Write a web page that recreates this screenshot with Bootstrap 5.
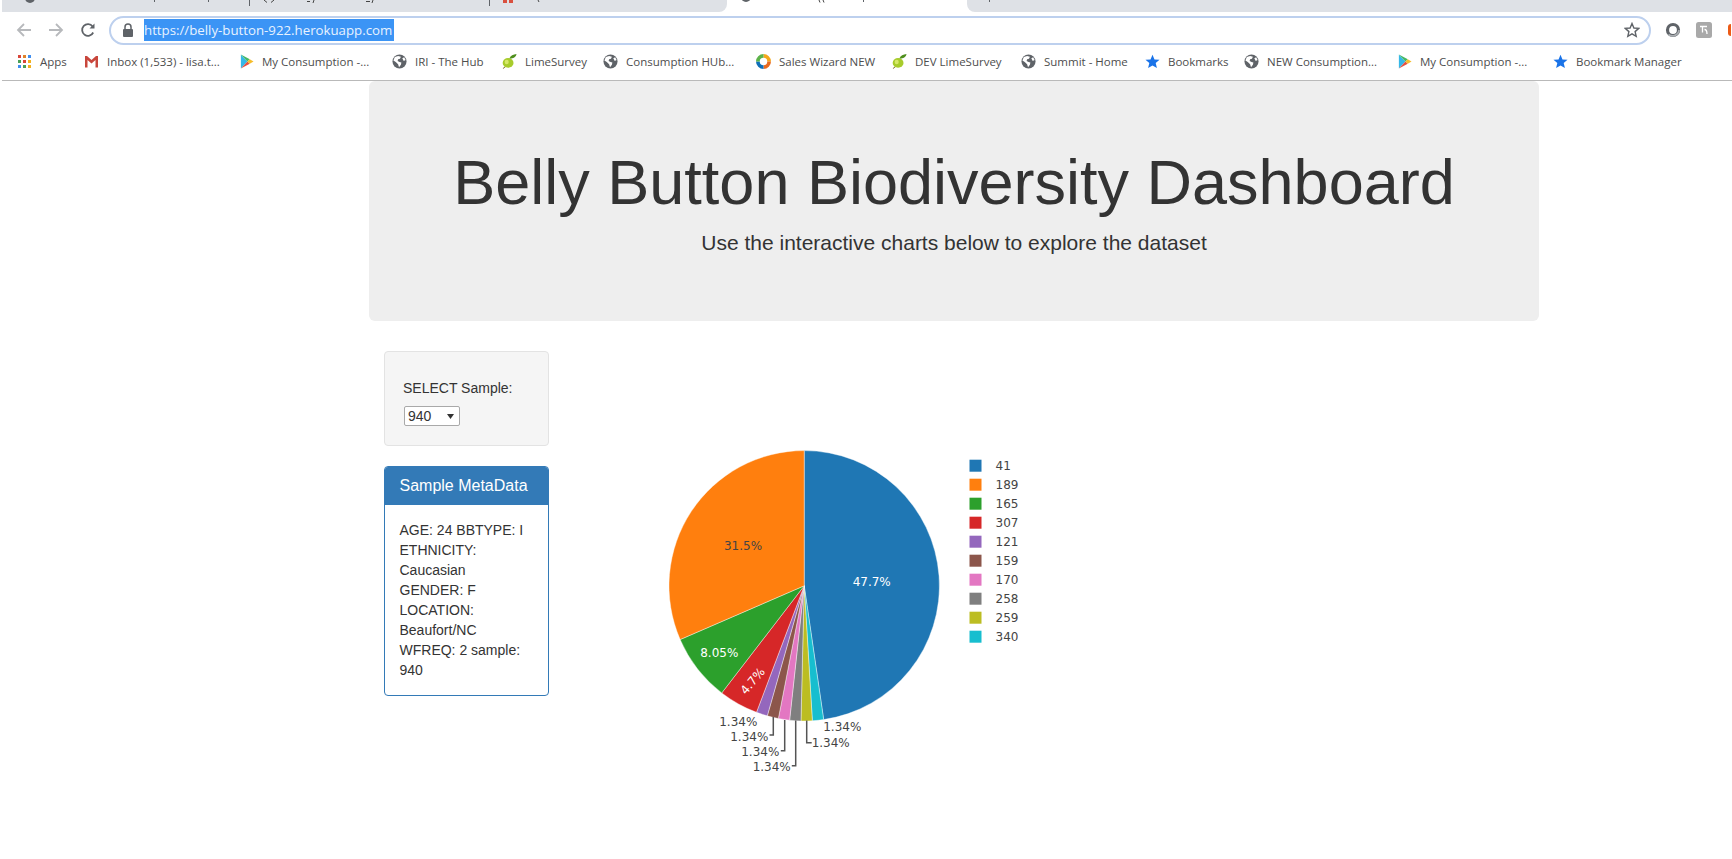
<!DOCTYPE html>
<html lang="en">
<head>
<meta charset="utf-8">
<title>Belly Button Biodiversity Dashboard</title>
<link href="https://cdn.jsdelivr.net/npm/bootstrap@5.3.0/dist/css/bootstrap.min.css" rel="stylesheet">
<style>
html,body{margin:0;background:#fff;overflow:hidden}
body{font-family:"Liberation Sans",Arial,sans-serif;font-size:14px;line-height:20px;color:#333}
.tab-strip{height:12px;position:relative;margin-left:2px}
.tab-off{background:#dee1e6}
.tab-off-l{width:725px;border-bottom-right-radius:8px}
.tab-on{width:240px;background:#fff}
.tab-off-r{border-bottom-left-radius:8px}
.tab-marks{position:absolute;left:-2px;top:0}
.tool-row{height:33px;padding-top:3px}
.nav-ico{width:16px;height:16px;flex:none}
.ico-back{margin-left:16px}
.ico-fwd{margin-left:16px}
.ico-reload{margin-left:16px}
.omni{width:1542px;height:29px;margin-left:13px;border:2px solid #bdd0ee;border-radius:15px;background:#fff}
.ico-lock{margin-left:11px;width:12px;height:14px;flex:none}
.url-sel{margin-left:10px;background:#3b94f5;color:#e8f2ff;font-family:"Open Sans",sans-serif;font-size:13.25px;line-height:22px;height:22px;white-space:nowrap;min-width:250px}
.ico-star{margin-left:auto;margin-right:9px;width:16px;height:16px}
.ext-ring{margin-left:14px;width:16px;height:16px;flex:none}
.ext-r{margin-left:15px;width:16px;height:16px;flex:none}
.ext-o{margin-left:16px;width:3px;height:12px;background:#ec5b16;border-radius:3px 0 0 3px;flex:none}
.mark-bar{height:36px;margin-left:2px;border-bottom:1px solid #b9b9b9;font-family:"Open Sans",sans-serif;font-size:11.5px;color:#4d4d4d;padding:0 0 2px 15px;white-space:nowrap}
.mark-item{display:flex;align-items:center;flex:none}
.mark-item:nth-child(1){width:67px}
.mark-item:nth-child(2){width:155px}
.mark-item:nth-child(3){width:153px}
.mark-item:nth-child(4){width:110px}
.mark-item:nth-child(5){width:101px}
.mark-item:nth-child(6){width:153px}
.mark-item:nth-child(7){width:136px}
.mark-item:nth-child(8){width:129px}
.mark-item:nth-child(9){width:124px}
.mark-item:nth-child(10){width:99px}
.mark-item:nth-child(11){width:153px}
.mark-item:nth-child(12){width:156px}
.mark-ico{width:15px;height:15px;flex:none;margin-right:8px}
.dash-wrap{width:1170px;margin-left:369px}
.hero{height:240px;background:#eee;border-radius:6px;color:#333;padding-top:67px}
.hero-title{font-size:63px;line-height:69px;margin:0;font-weight:400;font-family:inherit}
.hero-sub{font-size:21px;line-height:28px;margin:12px 0 0}
.dash-row{--bs-gutter-x:30px;margin:30px 0 0}
.pick-box{height:95px;background:#f5f5f5;border:1px solid #e3e3e3;border-radius:4px;padding:26px 18px 0;margin-bottom:20px}
.pick-label{display:block;margin-bottom:8px}
.pick-sel{display:block;margin-left:1px;appearance:none;-webkit-appearance:none;width:56px;height:20px;padding:0 0 0 3px;border:1px solid #a9a9a9;border-radius:2px;background:#fff url("data:image/svg+xml,%3Csvg xmlns='http://www.w3.org/2000/svg' width='7' height='5'%3E%3Cpath d='M0 0h7L3.5 5z' fill='%23333'/%3E%3C/svg%3E") no-repeat 42px 7px;font:14px "Liberation Sans",Arial,sans-serif;color:#333}
.meta-card{--bs-card-border-color:#337ab7;--bs-card-border-radius:4px;--bs-card-inner-border-radius:3px;border-color:#337ab7}
.meta-head{background:#337ab7;color:#fff;font-size:16px;line-height:18px;padding:10px 14.5px;border:0;height:38px}
.meta-body{padding:15px 16px 15px 14.5px;color:#333}
.pie-svg{display:block;font-family:"DejaVu Sans",Verdana,sans-serif;font-size:12px}
</style>
</head>
<body>
<svg width="0" height="0" class="d-block position-absolute">
  <defs>
    <symbol id="i-globe" viewBox="0 0 16 16"><circle cx="8" cy="8" r="7.5" fill="#5f6368"/><path d="M3 3.2 6.5 2 9.500 3 8.500 5 6.500 5.500 6 7.500 8 8.500 10 9 9.500 11.500 7.500 14 6.500 11 4 8.500 1.500 7ZM11 4.500 13 3.500 14.500 6.500 12.500 7.500Z" fill="#fff"/></symbol>
    <symbol id="i-star" viewBox="0 0 16 16"><path d="M8 .8 10.100 5.800 15.500 6.200 11.400 9.700 12.700 15 8 12.200 3.300 15 4.600 9.700.5 6.200 5.900 5.800Z" fill="#1a73e8"/></symbol>
    <symbol id="i-play" viewBox="0 0 16 16"><path d="M2 .5 9 8 2 15.500Z" fill="#35b8e8"/><path d="M2 .5 11.500 5.600 9 8Z" fill="#46b864"/><path d="M2 15.500 11.500 10.400 9 8Z" fill="#e8503f"/><path d="M11.500 5.600 15.500 8 11.500 10.400 9 8Z" fill="#f6bd2b"/></symbol>
    <symbol id="i-lime" viewBox="0 0 16 16"><path d="M1 15.500 5 12.500" stroke="#7b6a2a" fill="none"/><ellipse cx="6.500" cy="9.500" rx="5.800" ry="5.200" fill="#a8cc2c"/><ellipse cx="5" cy="8.500" rx="2.200" ry="2.500" fill="#d6e86a"/><path d="M8 4.500C9 1.500 12 .5 15.500 0 15 3 12.500 5.500 8 4.500Z" fill="#4f8f1e"/></symbol>
    <symbol id="i-wheel" viewBox="0 0 16 16"><g fill="none" stroke-width="4"><path d="M8 2A6 6 0 0 1 14 8" stroke="#f4a81c"/><path d="M14 8A6 6 0 0 1 8 14" stroke="#ea6a1f"/><path d="M8 14A6 6 0 0 1 2 8" stroke="#0f6fb8"/><path d="M2 8A6 6 0 0 1 8 2" stroke="#5db34a"/></g></symbol>
  </defs>
</svg>

<div class="d-flex tab-strip">
  <div class="tab-off tab-off-l"></div>
  <div class="tab-on"></div>
  <div class="tab-off tab-off-r flex-grow-1"></div>
  <svg class="tab-marks" width="1732" height="12" viewBox="0 0 1732 12">
    <circle cx="30" cy="-2" r="5" fill="#5f6368"/>
    <path d="M154.500 0v2M208.500 0v2M249.500 0v6M489.500 0v6M863.500 0v2M989.500 0v2" stroke="#5f6368"/>
    <path d="M264 0l3 2.500M274 0l-3 2.500M307 1.500h3M314 0l-1 3M366 1.500h4M373 0l-1 3M538 0l1 2M819 0l1 2.500M823 0l1 2.500" stroke="#444" fill="none"/>
    <path d="M503 0h4v3h-4zM509 0h4v3h-4z" fill="#d9503f"/>
    <circle cx="746" cy="-3" r="5" fill="#5f6368"/>
  </svg>
</div>

<div class="d-flex align-items-center tool-row">
  <svg class="nav-ico ico-back" viewBox="0 0 16 16"><path d="M15 8H2M8 2 2 8l6 6" fill="none" stroke="#b7b9bc" stroke-width="1.800"/></svg>
  <svg class="nav-ico ico-fwd" viewBox="0 0 16 16"><path d="M1 8h13M8 2l6 6-6 6" fill="none" stroke="#b7b9bc" stroke-width="1.800"/></svg>
  <svg class="nav-ico ico-reload" viewBox="0 0 16 16"><path d="M13.200 10.500A5.800 5.800 0 1 1 12.600 4.500" fill="none" stroke="#5f6368" stroke-width="1.800"/><path d="M14.500 1.500v5h-5z" fill="#5f6368"/></svg>
  <div class="d-flex align-items-center omni">
    <svg class="ico-lock" viewBox="0 0 12 14"><path d="M3 6V4a3 3 0 0 1 6 0v2" fill="none" stroke="#5f6368" stroke-width="1.500"/><rect x="1" y="6" width="10" height="8" rx="1" fill="#5f6368"/></svg>
    <span class="url-sel">https://belly-button-922.herokuapp.com</span>
    <svg class="ico-star" viewBox="0 0 16 16"><path d="M8 1.500 9.900 6 14.800 6.400 11.100 9.600 12.200 14.400 8 11.900 3.800 14.400 4.900 9.600 1.200 6.400 6.100 6Z" fill="none" stroke="#5f6368" stroke-width="1.400"/></svg>
  </div>
  <svg class="ext-ring" viewBox="0 0 16 16"><circle cx="8" cy="8" r="5.500" fill="none" stroke="#5f6368" stroke-width="3.200"/><path d="M3.500 12.500A6.500 6.500 0 0 0 14 8" fill="none" stroke="#a9adb1" stroke-width="1.800"/></svg>
  <svg class="ext-r" viewBox="0 0 16 16"><rect width="16" height="16" rx="2.500" fill="#a9a9a9"/><path d="M4 4.500h7M6.500 4.500v6M8.500 7.500c2 0 2.500 1.500 2.500 4.500" fill="none" stroke="#fff" stroke-width="1.300"/></svg>
  <div class="ext-o"></div>
</div>

<div class="d-flex align-items-center mark-bar">
  <div class="mark-item"><svg class="mark-ico" viewBox="0 0 15 15"><path d="M1 1h3v3H1z" fill="#d9453a"/><path d="M6 1h3v3H6z" fill="#e0832a"/><path d="M11 1h3v3h-3z" fill="#3f8ef0"/><path d="M1 6h3v3H1z" fill="#4aa056"/><path d="M6 6h3v3H6z" fill="#d9453a"/><path d="M11 6h3v3h-3z" fill="#f2b01e"/><path d="M1 11h3v3H1z" fill="#3f8ef0"/><path d="M6 11h3v3H6z" fill="#4aa056"/><path d="M11 11h3v3h-3z" fill="#f2b01e"/></svg><span>Apps</span></div>
  <div class="mark-item"><svg class="mark-ico" viewBox="0 0 15 15"><path d="M1 2h2l4.500 4L12 2h2v11.500h-2.500V6L7.500 9.500 3.500 6v7.500H1Z" fill="#c8463c"/></svg><span>Inbox (1,533) - lisa.t...</span></div>
  <div class="mark-item"><svg class="mark-ico"><use href="#i-play"/></svg><span>My Consumption -...</span></div>
  <div class="mark-item"><svg class="mark-ico"><use href="#i-globe"/></svg><span>IRI - The Hub</span></div>
  <div class="mark-item"><svg class="mark-ico"><use href="#i-lime"/></svg><span>LimeSurvey</span></div>
  <div class="mark-item"><svg class="mark-ico"><use href="#i-globe"/></svg><span>Consumption HUb...</span></div>
  <div class="mark-item"><svg class="mark-ico"><use href="#i-wheel"/></svg><span>Sales Wizard NEW</span></div>
  <div class="mark-item"><svg class="mark-ico"><use href="#i-lime"/></svg><span>DEV LimeSurvey</span></div>
  <div class="mark-item"><svg class="mark-ico"><use href="#i-globe"/></svg><span>Summit - Home</span></div>
  <div class="mark-item"><svg class="mark-ico"><use href="#i-star"/></svg><span>Bookmarks</span></div>
  <div class="mark-item"><svg class="mark-ico"><use href="#i-globe"/></svg><span>NEW Consumption...</span></div>
  <div class="mark-item"><svg class="mark-ico"><use href="#i-play"/></svg><span>My Consumption -...</span></div>
  <div class="mark-item"><svg class="mark-ico"><use href="#i-star"/></svg><span>Bookmark Manager</span></div>
</div>

<div class="dash-wrap">
  <div class="hero text-center">
    <h1 class="hero-title">Belly Button Biodiversity Dashboard</h1>
    <p class="hero-sub">Use the interactive charts below to explore the dataset</p>
  </div>
  <div class="row dash-row">
    <div class="col-2">
      <div class="pick-box">
        <label class="pick-label" for="selDataset">SELECT Sample:</label>
        <select id="selDataset" class="pick-sel"><option>940</option></select>
      </div>
      <div class="card meta-card">
        <div class="card-header meta-head">Sample MetaData</div>
        <div class="card-body meta-body">AGE: 24 BBTYPE: I ETHNICITY: Caucasian GENDER: F LOCATION: Beaufort/NC WFREQ: 2 sample: 940</div>
      </div>
    </div>
    <div class="col-10 p-0">
      <svg class="pie-svg" width="600" height="450" viewBox="564 351 600 450" id="pie">
        <g id="wedges"></g>
        <g fill="none" stroke="#555" stroke-width="1.500">
          <path d="M773.300 717V735H769.500"/>
          <path d="M784.700 720V750.700H780.800"/>
          <path d="M795.700 720.500V765.700H791.800"/>
          <path d="M806.700 720.500V742.700H811.700"/>
        </g>
        <g text-anchor="middle" dominant-baseline="central" fill="#444">
          <text x="871.700" y="581.700" fill="#fff">47.7%</text>
          <text x="743" y="545.700">31.5%</text>
          <text x="719.300" y="652.700" fill="#fff">8.05%</text>
          <text x="752.700" y="681" fill="#fff" transform="rotate(-50 752.700 681)">4.7%</text>
          <text x="842.300" y="727.300">1.34%</text>
          <text x="830.700" y="742.700">1.34%</text>
          <text x="738.300" y="721.700">1.34%</text>
          <text x="749.300" y="736.700">1.34%</text>
          <text x="760.300" y="751.700">1.34%</text>
          <text x="771.700" y="766.700">1.34%</text>
        </g>
        <g id="legend" fill="#444" dominant-baseline="central"></g>
      </svg>
    </div>
  </div>
</div>

<script src="https://cdn.jsdelivr.net/npm/bootstrap@5.3.0/dist/js/bootstrap.bundle.min.js"></script>
<script>
(function(){
  var NS='http://www.w3.org/2000/svg',cx=804.2,cy=585.8,r=135.2;
  var clockwise=[[47.7,'#1f77b4'],[1.34,'#17becf'],[1.34,'#bcbd22'],[1.34,'#7f7f7f'],[1.34,'#e377c2'],[1.34,'#8c564b'],[1.34,'#9467bd'],[4.7,'#d62728'],[8.05,'#2ca02c'],[31.51,'#ff7f0e']];
  var g=document.getElementById('wedges'),a=0;
  clockwise.forEach(function(s){
    var b=a+s[0]/100*2*Math.PI,p=document.createElementNS(NS,'path');
    p.setAttribute('d','M'+cx+' '+cy+'L'+(cx+r*Math.sin(a))+' '+(cy-r*Math.cos(a))+'A'+r+' '+r+' 0 '+(b-a>Math.PI?1:0)+' 1 '+(cx+r*Math.sin(b))+' '+(cy-r*Math.cos(b))+'Z');
    p.setAttribute('fill',s[1]);p.setAttribute('stroke','#fff');p.setAttribute('stroke-width','.4');
    g.appendChild(p);a=b;
  });
  var leg=[['41','#1f77b4'],['189','#ff7f0e'],['165','#2ca02c'],['307','#d62728'],['121','#9467bd'],['159','#8c564b'],['170','#e377c2'],['258','#7f7f7f'],['259','#bcbd22'],['340','#17becf']];
  var L=document.getElementById('legend');
  leg.forEach(function(l,i){
    var y=465.7+i*19,q=document.createElementNS(NS,'rect');
    q.setAttribute('x',969.5);q.setAttribute('y',y-6);q.setAttribute('width',12);q.setAttribute('height',12);q.setAttribute('fill',l[1]);
    L.appendChild(q);
    var t=document.createElementNS(NS,'text');t.setAttribute('x',995.5);t.setAttribute('y',y);t.textContent=l[0];L.appendChild(t);
  });
})();
</script>
</body>
</html>
